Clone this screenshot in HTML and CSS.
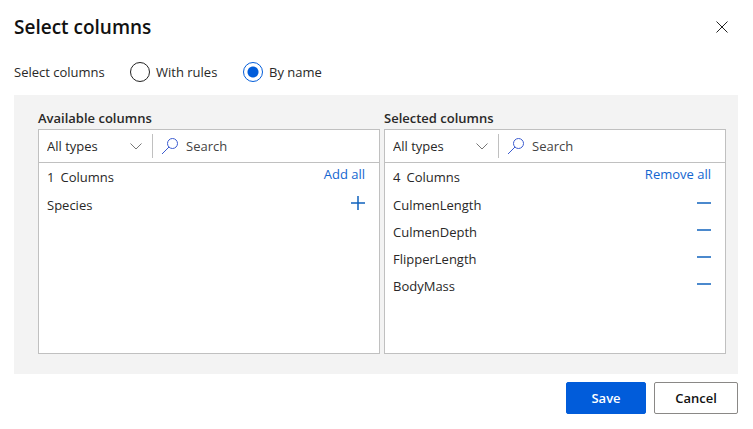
FILE: index.html
```html
<!DOCTYPE html>
<html lang="en">
<head>
<meta charset="utf-8">
<meta name="viewport" content="width=device-width, initial-scale=1">
<title>Select columns</title>
<link rel="stylesheet" href="styles.css">
</head>
<body>
<form class="dialog">
  <header class="dialog-header">
    <h1>Select columns</h1>
    <button type="button" class="icon-button" aria-label="Close">
      <svg width="12" height="12" viewBox="0 0 12 12"><path d="M.5 .5l11 11M11.5 .5l-11 11"/></svg>
    </button>
  </header>

  <div class="mode" role="radiogroup" aria-labelledby="mode-label">
    <span id="mode-label" class="mode-label">Select columns</span>
    <label class="radio"><input type="radio" name="mode" value="rules">With rules</label>
    <label class="radio"><input type="radio" name="mode" value="name" checked>By name</label>
  </div>

  <div class="panel">
    <section class="picker">
      <h2>Available columns</h2>
      <div class="box">
        <div class="filters">
          <div class="type-filter">
            <select aria-label="Available column type"><option>All types</option></select>
            <svg class="chevron" width="12" height="7" viewBox="0 0 12 7"><path d="M.5 .5L6 6l5.500-5.500"/></svg>
          </div>
          <label class="search">
            <svg class="search-icon" width="18" height="18" viewBox="0 0 18 18"><circle cx="11.500" cy="6.500" r="5"/><path d="M8 10L1 17"/></svg>
            <input type="text" placeholder="Search" aria-label="Search available columns">
          </label>
        </div>
        <div class="summary"><span class="count"><span>1</span><span>Columns</span></span><a href="#">Add all</a></div>
        <ul class="columns">
          <li>Species<button type="button" class="row-button" aria-label="Add Species"><svg width="14" height="14" viewBox="0 0 14 14"><path d="M0 7h14M7 0v14"/></svg></button></li>
        </ul>
      </div>
    </section>

    <section class="picker">
      <h2>Selected columns</h2>
      <div class="box">
        <div class="filters">
          <div class="type-filter">
            <select aria-label="Selected column type"><option>All types</option></select>
            <svg class="chevron" width="12" height="7" viewBox="0 0 12 7"><path d="M.5 .5L6 6l5.500-5.500"/></svg>
          </div>
          <label class="search">
            <svg class="search-icon" width="18" height="18" viewBox="0 0 18 18"><circle cx="11.500" cy="6.500" r="5"/><path d="M8 10L1 17"/></svg>
            <input type="text" placeholder="Search" aria-label="Search selected columns">
          </label>
        </div>
        <div class="summary"><span class="count"><span>4</span><span>Columns</span></span><a href="#">Remove all</a></div>
        <ul class="columns">
          <li>CulmenLength<button type="button" class="row-button" aria-label="Remove CulmenLength"><svg width="14" height="14" viewBox="0 0 14 14"><path d="M0 7h14"/></svg></button></li>
          <li>CulmenDepth<button type="button" class="row-button" aria-label="Remove CulmenDepth"><svg width="14" height="14" viewBox="0 0 14 14"><path d="M0 7h14"/></svg></button></li>
          <li>FlipperLength<button type="button" class="row-button" aria-label="Remove FlipperLength"><svg width="14" height="14" viewBox="0 0 14 14"><path d="M0 7h14"/></svg></button></li>
          <li>BodyMass<button type="button" class="row-button" aria-label="Remove BodyMass"><svg width="14" height="14" viewBox="0 0 14 14"><path d="M0 7h14"/></svg></button></li>
        </ul>
      </div>
    </section>
  </div>

  <footer class="actions">
    <button type="submit" class="button primary">Save</button>
    <button type="button" class="button">Cancel</button>
  </footer>
</form>
</body>
</html>
```
FILE: styles.css
```css
* { box-sizing: border-box; }

body {
  margin: 0;
  background: #fff;
  color: #292827;
  font: 13px/20px "Open Sans", "Noto Sans", sans-serif;
}

button, input, select { font: inherit; color: inherit; }
svg { display: block; fill: none; }

.dialog { padding: 12px 15px 12px 14px; }

.dialog-header {
  display: flex;
  align-items: center;
  justify-content: space-between;
  height: 30px;
}

h1 {
  margin: 0;
  color: #111;
  font-size: 19px;
  font-weight: 600;
  line-height: 30px;
}

.icon-button {
  padding: 4px;
  margin-right: 6px;
  border: 0;
  background: none;
  stroke: #222;
}

.mode {
  display: flex;
  align-items: center;
  gap: 24px;
  height: 20px;
  margin: 20px 0 13px;
}

.mode-label { width: 92px; white-space: nowrap; }

.radio {
  display: flex;
  align-items: center;
  gap: 6px;
  width: 89px;
  white-space: nowrap;
}

.radio input {
  appearance: none;
  flex: none;
  width: 20px;
  height: 20px;
  margin: 0;
  border: 1px solid #222;
  border-radius: 50%;
}

.radio input:checked {
  border-color: #015cda;
  background: radial-gradient(circle, #015cda 5px, #fff 6px);
}

.panel {
  display: grid;
  grid-template-columns: 1fr 1fr;
  gap: 4px;
  padding: 13px 12px 20px 24px;
  background: #f3f3f3;
}

h2 {
  margin: 0;
  font-size: 13px;
  font-weight: 600;
  line-height: 21px;
}

.box {
  min-height: 225px;
  border: 1px solid #c0c0c0;
  background: #fff;
}

.filters {
  display: flex;
  align-items: center;
  height: 33px;
  border-bottom: 1px solid #c0c0c0;
}

.type-filter {
  display: flex;
  align-items: center;
  width: 114px;
  height: 24px;
  padding: 0 10px 0 8px;
  border-right: 1px solid #c0c0c0;
}

.type-filter select {
  appearance: none;
  flex: 1;
  min-width: 0;
  padding: 0;
  border: 0;
  background: none;
}

.chevron { stroke: #777; }

.search {
  display: flex;
  flex: 1;
  align-items: center;
  gap: 7px;
  padding: 0 8px;
}

.search-icon { stroke: #3b5bd0; }

.search input {
  flex: 1;
  min-width: 0;
  padding: 0;
  border: 0;
  background: none;
}

.search input::placeholder { color: #444; opacity: 1; }

.summary {
  display: flex;
  justify-content: space-between;
  padding: 1px 14px 0 8px;
  height: 28px;
}

.count { display: flex; gap: 6px; padding-top: 3px; }

a { color: #1366d0; text-decoration: none; }

.columns { margin: 0; padding: 0; list-style: none; }

.columns li {
  display: flex;
  align-items: center;
  justify-content: space-between;
  height: 27px;
  padding: 0 14px 0 8px;
}

.row-button {
  padding: 0 0 3px;
  border: 0;
  background: none;
  stroke: #0f62bd;
  stroke-width: 1.500;
}

.actions {
  display: flex;
  justify-content: flex-end;
  gap: 8px;
  margin-top: 8px;
}

.button {
  min-width: 84px;
  height: 32px;
  border: 1px solid #8a8886;
  border-radius: 2px;
  background: #fff;
  color: #111;
  font-weight: 600;
}

.primary {
  min-width: 80px;
  border-color: #015cda;
  background: #015cda;
  color: #fff;
}
```
